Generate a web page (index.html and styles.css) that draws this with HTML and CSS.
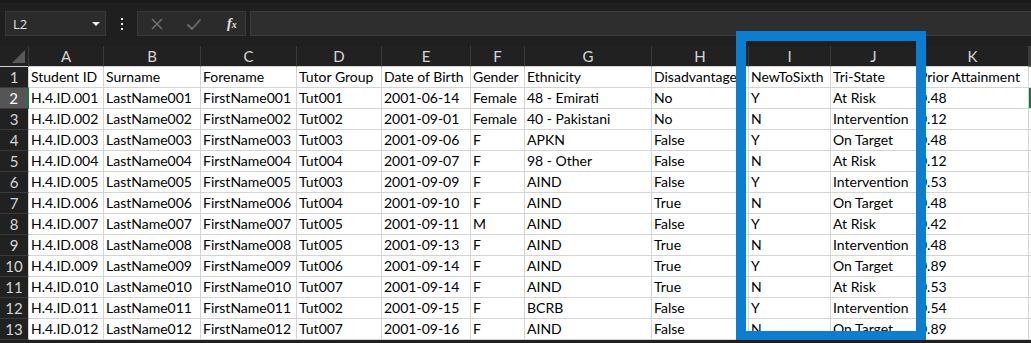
FILE: index.html
```html
<!DOCTYPE html>
<html lang="en">
<head>
    <meta charset="UTF-8">
    <title>Students - Excel</title>
    <link rel="stylesheet" href="styles.css">
</head>
<body>
    <div class="formula-bar">
        <div class="name-box">
            <span>L2</span>
            <span class="caret"></span>
        </div>
        <div class="grip"><i></i><i></i><i></i></div>
        <div class="fx-buttons">
            <svg width="14" height="14" viewBox="0 0 14 14"><path d="M2 2 L12 12 M12 2 L2 12" stroke="#6e6e6e" stroke-width="1.6" fill="none"/></svg>
            <svg width="16" height="14" viewBox="0 0 16 14"><path d="M1.5 7.5 L6 12 L14.5 2.5" stroke="#6e6e6e" stroke-width="1.8" fill="none"/></svg>
            <span class="fx">f<sub>x</sub></span>
        </div>
        <div class="formula-input"></div>
    </div>

    <div class="sheet">
        <table class="grid">
            <thead>
                <tr>
                    <th class="corner"><span class="tri"></span></th>
                    <th>A</th><th>B</th><th>C</th><th>D</th><th>E</th><th>F</th>
                    <th>G</th><th>H</th><th>I</th><th>J</th><th>K</th><th class="sel-col"></th>
                </tr>
            </thead>
            <tbody>
                <tr><th>1</th><td>Student ID</td><td>Surname</td><td>Forename</td><td>Tutor Group</td><td>Date of Birth</td><td>Gender</td><td>Ethnicity</td><td>Disadvantaged</td><td>NewToSixth</td><td>Tri-State</td><td>Prior Attainment</td><td></td></tr>
                <tr><th class="sel-row">2</th><td>H.4.ID.001</td><td>LastName001</td><td>FirstName001</td><td>Tut001</td><td>2001-06-14</td><td>Female</td><td>48 - Emirati</td><td>No</td><td>Y</td><td>At Risk</td><td>0.48</td><td class="active"></td></tr>
                <tr><th>3</th><td>H.4.ID.002</td><td>LastName002</td><td>FirstName002</td><td>Tut002</td><td>2001-09-01</td><td>Female</td><td>40 - Pakistani</td><td>No</td><td>N</td><td>Intervention</td><td>0.12</td><td></td></tr>
                <tr><th>4</th><td>H.4.ID.003</td><td>LastName003</td><td>FirstName003</td><td>Tut003</td><td>2001-09-06</td><td>F</td><td>APKN</td><td>False</td><td>Y</td><td>On Target</td><td>0.48</td><td></td></tr>
                <tr><th>5</th><td>H.4.ID.004</td><td>LastName004</td><td>FirstName004</td><td>Tut004</td><td>2001-09-07</td><td>F</td><td>98 - Other</td><td>False</td><td>N</td><td>At Risk</td><td>0.12</td><td></td></tr>
                <tr><th>6</th><td>H.4.ID.005</td><td>LastName005</td><td>FirstName005</td><td>Tut003</td><td>2001-09-09</td><td>F</td><td>AIND</td><td>False</td><td>Y</td><td>Intervention</td><td>0.53</td><td></td></tr>
                <tr><th>7</th><td>H.4.ID.006</td><td>LastName006</td><td>FirstName006</td><td>Tut004</td><td>2001-09-10</td><td>F</td><td>AIND</td><td>True</td><td>N</td><td>On Target</td><td>0.48</td><td></td></tr>
                <tr><th>8</th><td>H.4.ID.007</td><td>LastName007</td><td>FirstName007</td><td>Tut005</td><td>2001-09-11</td><td>M</td><td>AIND</td><td>False</td><td>Y</td><td>At Risk</td><td>0.42</td><td></td></tr>
                <tr><th>9</th><td>H.4.ID.008</td><td>LastName008</td><td>FirstName008</td><td>Tut005</td><td>2001-09-13</td><td>F</td><td>AIND</td><td>True</td><td>N</td><td>Intervention</td><td>0.48</td><td></td></tr>
                <tr><th>10</th><td>H.4.ID.009</td><td>LastName009</td><td>FirstName009</td><td>Tut006</td><td>2001-09-14</td><td>F</td><td>AIND</td><td>True</td><td>Y</td><td>On Target</td><td>0.89</td><td></td></tr>
                <tr><th>11</th><td>H.4.ID.010</td><td>LastName010</td><td>FirstName010</td><td>Tut007</td><td>2001-09-14</td><td>F</td><td>AIND</td><td>True</td><td>N</td><td>At Risk</td><td>0.53</td><td></td></tr>
                <tr><th>12</th><td>H.4.ID.011</td><td>LastName011</td><td>FirstName011</td><td>Tut002</td><td>2001-09-15</td><td>F</td><td>BCRB</td><td>False</td><td>Y</td><td>Intervention</td><td>0.54</td><td></td></tr>
                <tr><th>13</th><td>H.4.ID.012</td><td>LastName012</td><td>FirstName012</td><td>Tut007</td><td>2001-09-16</td><td>F</td><td>AIND</td><td>False</td><td>N</td><td>On Target</td><td>0.89</td><td></td></tr>
            </tbody>
        </table>
        <div class="highlight"></div>
    </div>
</body>
</html>
```

FILE: styles.css
```css
body{
    margin: 0;
    background: #1f1f1f;
    font-family: Lato, "Open Sans", sans-serif;
    overflow: hidden;
}

/* formula bar */
.formula-bar{
    height: 46px;
    box-sizing: border-box;
    padding: 8px 0 0 5px;
    display: flex;
    align-items: flex-start;
    background: #1f1f1f;
    border-top: 3px solid #1a1a1a;
}

.name-box{
    width: 101px;
    height: 25px;
    box-sizing: border-box;
    background: #2b2b2b;
    border: 1px solid #3a3a3a;
    display: flex;
    align-items: center;
    justify-content: space-between;
    padding: 0 5px 0 7px;
    color: #e6e6e6;
    font-family: "Open Sans", sans-serif;
    font-size: 13px;
}

.caret{
    width: 0;
    height: 0;
    border-left: 4px solid transparent;
    border-right: 4px solid transparent;
    border-top: 4px solid #f0f0f0;
}

.grip{
    width: 31px;
    height: 25px;
    display: flex;
    flex-direction: column;
    align-items: center;
    justify-content: center;
    gap: 3px;
}

.grip i{
    width: 2px;
    height: 2px;
    background: #e8e8e8;
}

.fx-buttons{
    width: 109px;
    height: 25px;
    box-sizing: border-box;
    background: #2b2b2b;
    border: 1px solid #3a3a3a;
    display: flex;
    align-items: center;
    padding: 0 0 0 12px;
    gap: 22px;
}

.fx{
    font-family: "Liberation Serif", serif;
    font-style: italic;
    font-weight: bold;
    font-size: 14px;
    color: #e4e4e4;
    margin-left: 3px;
}

.fx sub{
    font-size: 10px;
    vertical-align: 0;
}

.formula-input{
    flex: 1;
    height: 25px;
    box-sizing: border-box;
    margin-left: 4px;
    background: #2e2e2e;
    border: 1px solid #3c3c3c;
    border-right: none;
}

/* sheet */
.sheet{
    position: relative;
}

.grid{
    table-layout: fixed;
    border-collapse: separate;
    border-spacing: 0;
    width: 1060px;
    font-size: 14px;
}

.grid th,
.grid td{
    box-sizing: border-box;
    height: 21px;
    padding: 0 1px 0 2px;
    white-space: nowrap;
    overflow: hidden;
    line-height: 20px;
    vertical-align: bottom;
}

.grid td{
    background: #fff;
    color: #000;
    text-align: left;
    border-right: 1px solid #d4d4d4;
    border-bottom: 1px solid #d4d4d4;
}

.grid th{
    background: #212121;
    color: #d6d6d6;
    font-weight: normal;
    font-size: 15px;
    text-align: center;
    border-right: 1px solid #3b3b3b;
    border-bottom: 1px solid #3b3b3b;
    padding: 0;
}

.grid thead th{
    border-bottom-color: #d4d4d4;
}

.grid tbody th{
    border-right-color: #d4d4d4;
    border-bottom-color: #3b3b3b;
}

.grid thead th:nth-child(1){ width: 29px; }
.grid thead th:nth-child(2){ width: 75px; }
.grid thead th:nth-child(3){ width: 97px; }
.grid thead th:nth-child(4){ width: 96px; }
.grid thead th:nth-child(5){ width: 85px; }
.grid thead th:nth-child(6){ width: 89px; }
.grid thead th:nth-child(7){ width: 54px; }
.grid thead th:nth-child(8){ width: 127px; }
.grid thead th:nth-child(9){ width: 97px; }
.grid thead th:nth-child(10){ width: 82px; }
.grid thead th:nth-child(11){ width: 86px; }
.grid thead th:nth-child(12){ width: 112px; }
.grid thead th:nth-child(13){ width: 60px; }

.corner{
    position: relative;
}

.tri{
    position: absolute;
    right: 3px;
    bottom: 3px;
    width: 0;
    height: 0;
    border-left: 13px solid transparent;
    border-bottom: 13px solid #595959;
}

.grid .sel-col{
    background: #3d3d3d;
    border-bottom: 2px solid #217346;
}

.grid .sel-row{
    background: #555;
    color: #fff;
    border-right: 2px solid #217346;
}

.grid td.active{
    box-shadow: inset 2px 0 0 #217346, inset 0 2px 0 #217346, inset 0 -2px 0 #217346;
}

.highlight{
    position: absolute;
    left: 736px;
    top: -15px;
    width: 190px;
    height: 310px;
    box-sizing: border-box;
    border: 10px solid #0a7ed1;
}
```
